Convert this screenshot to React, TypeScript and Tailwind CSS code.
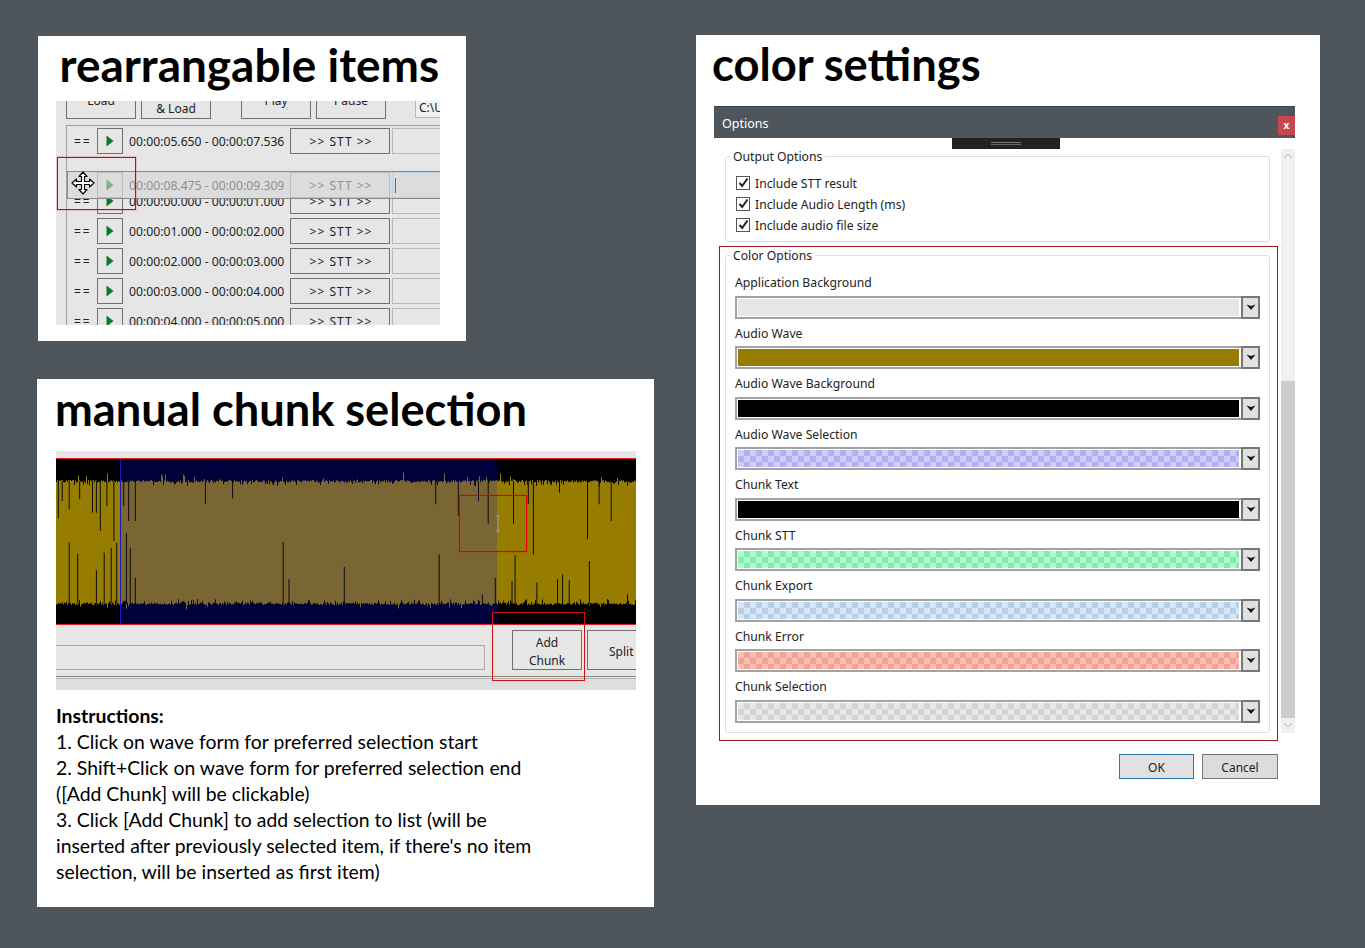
import React from "react";

const ui = "font-['Noto_Sans','Open_Sans',sans-serif]";
const title = "font-['Lato',sans-serif] font-bold text-black leading-none";

let seed = 1234567;
const rnd = () => {
  seed = (seed * 1664525 + 1013904223) % 4294967296;
  return seed / 4294967296;
};

// x and y come from a reading of the picture at its enlarged scale
const zx = (x: number) => x / 2.57 - 16;
const zy = (y: number) => y / 3 - 18;
const topSpikes: [number, number][] = [
  [47, 232], [57, 180], [75, 205], [102, 175], [135, 215], [145, 215], [155, 270], [172, 195], [190, 300], [215, 195], [228, 240], [245, 240], [425, 188], [495, 172], [1017, 190], [1075, 225], [1127, 180], [1152, 248], [1217, 248], [1255, 188], [1268, 340], [1335, 155], [1407, 295], [1437, 190], [1468, 240],
];
const bottomSpikes: [number, number][] = [
  [75, 305], [97, 338], [145, 388], [165, 335], [183, 320], [197, 305], [222, 275], [232, 320], [245, 410], [625, 303], [640, 415], [782, 378], [1026, 340], [1137, 460], [1170, 410], [1213, 420], [1221, 343], [1277, 425], [1330, 415], [1343, 400], [1360, 418], [1412, 360], [1510, 460],
];

let gold = "";
let brown = "";
let notches = "";
for (let x = 0; x < 580; x++) {
  const up = rnd() > 0.97 ? 3 + rnd() * 7 : rnd() * 2.5;
  const down = rnd() > 0.96 ? 3 + rnd() * 5 : rnd() * 2.5;
  const seg = `M${x + 0.5} ${(23.5 - up).toFixed(1)}V${(143.5 + down).toFixed(1)}`;
  if (x >= 64 && x < 441) brown += seg;
  else gold += seg;
  if (rnd() > 0.85) notches += `M${x + 0.5} ${(23 - up).toFixed(1)}v${(2 + rnd() * 2.5).toFixed(1)}`;
  if (rnd() > 0.85) notches += `M${x + 0.5} ${(144 + down).toFixed(1)}v-${(2 + rnd() * 2.5).toFixed(1)}`;
}
for (const [x, y] of topSpikes) notches += `M${zx(x).toFixed(1)} 22V${zy(y).toFixed(1)}`;
for (const [x, y] of bottomSpikes) notches += `M${zx(x).toFixed(1)} 145V${zy(y).toFixed(1)}`;

function Play({ className = "" }: { className?: string }) {
  return (
    <svg width="8" height="12" viewBox="0 0 8 12" className={className}>
      <polygon points="0.5,0.5 7.5,6 0.5,11.5" fill="#0b7a2a" />
    </svg>
  );
}

function Row({ time }: { time: string }) {
  return (
    <div className="flex items-center h-[26px] mb-[4px] shrink-0 text-[#222]">
      <span className="w-[30px] shrink-0 pl-[7px] pt-[2px] text-[12px] tracking-[2px]">==</span>
      <div className="w-[26px] h-[26px] shrink-0 border border-[#707070] flex items-center justify-center bg-[#e6e6e6]">
        <Play />
      </div>
      <span className="w-[167px] shrink-0 pl-[6px] pt-[2px] text-[12.2px] whitespace-nowrap">{time}</span>
      <div className="w-[100px] h-[26px] shrink-0 border border-[#707070] flex items-center justify-center pt-[2px] pl-[2px] text-[12px] tracking-[1px] whitespace-nowrap">
        {">> STT >>"}
      </div>
      <div className="w-[60px] h-[26px] ml-[2px] border border-[#b8b8b8] shrink-0" />
    </div>
  );
}

function TopBtn({ a, cls, spacer }: { a: string; cls: string; spacer?: boolean }) {
  return (
    <div className={`h-[40px] w-[70px] shrink-0 border border-[#707070] flex flex-col items-center justify-center pt-[4px] text-[12px] leading-[18px] text-[#222] ${cls}`}>
      {spacer && <span className="h-[18px]" />}
      <span>{a}</span>
    </div>
  );
}

function Rearrange() {
  return (
    <div className="w-[428px] h-[305px] bg-white flex flex-col">
      <h2 className={`${title} text-[45.9px] h-[65px] pl-[21.5px] pt-[6px] whitespace-nowrap`}>rearrangable items</h2>
      <div className={`${ui} relative ml-[18px] w-[384px] h-[224px] bg-[#e6e6e6] overflow-hidden`}>
        <div className="flex items-end h-[18px] pl-[10px]">
          <TopBtn a="Load" cls="" />
          <TopBtn a="& Load" cls="ml-[5px]" spacer />
          <TopBtn a="Play" cls="ml-[30px]" />
          <TopBtn a="Pause" cls="ml-[5px]" />
          <div className="ml-[29px] mb-[1px] h-[30px] w-[60px] shrink-0 border border-[#b8b8b8] bg-[#f0f0f0] text-[12px] text-[#222] pl-[3px] pt-[10px] whitespace-nowrap">C:\Users</div>
        </div>
        <div className="mt-[6px] ml-[10px] border-l border-t border-[#a0a0a0] h-[210px] pt-[2px] flex flex-col">
          <Row time="00:00:05.650 - 00:00:07.536" />
          <div className="mt-[30px]"><Row time="00:00:00.000 - 00:00:01.000" /></div>
          <Row time="00:00:01.000 - 00:00:02.000" />
          <Row time="00:00:02.000 - 00:00:03.000" />
          <Row time="00:00:03.000 - 00:00:04.000" />
          <Row time="00:00:04.000 - 00:00:05.000" />
        </div>
        {/* the row being dragged */}
        <div className="absolute left-[11px] top-[70px] w-[373px] h-[28px] bg-[#dcdcdc] border-t border-b border-l border-[#8a8a8a] flex items-center text-[#8f8f8f]">
          <span className="w-[29px] shrink-0" />
          <div className="w-[26px] h-[26px] shrink-0 border border-[#bdbdbd] flex items-center justify-center">
            <Play className="opacity-45" />
          </div>
          <span className="w-[167px] shrink-0 pl-[6px] pt-[2px] text-[12.2px] whitespace-nowrap">00:00:08.475 - 00:00:09.309</span>
          <div className="w-[100px] h-[26px] shrink-0 border border-[#bdbdbd] flex items-center justify-center pt-[2px] pl-[2px] text-[12px] tracking-[1px] whitespace-nowrap">{">> STT >>"}</div>
          <div className="w-[60px] h-[26px] ml-[2px] border border-[#b9d2e6] pl-[2px] flex items-center shrink-0">
            <span className="w-px h-[15px] bg-[#666]" />
          </div>
        </div>
        <div className="absolute left-[1px] top-[56px] w-[79px] h-[53px] border border-[#e00000] shadow-[0_0_1px_#ff0000]" />
        <svg width="24" height="24" viewBox="0 0 24 24" className="absolute left-[15px] top-[70px]">
          <path d="M12 1 16 5.500H13.500V10.500H18.500V8L23 12 18.500 16V13.500H13.500V18.500H16L12 23 8 18.500H10.500V13.500H5.500V16L1 12 5.500 8V10.500H10.500V5.500H8Z" fill="#fff" stroke="#000" strokeWidth="1.2" strokeLinejoin="round" />
        </svg>
      </div>
    </div>
  );
}

function Chunk() {
  return (
    <div className="w-[617px] h-[528px] bg-white flex flex-col">
      <h2 className={`${title} text-[45.2px] h-[72px] pl-[18px] pt-[7px] whitespace-nowrap`}>manual chunk selection</h2>
      <div className={`${ui} relative ml-[19px] w-[580px] h-[239px] bg-[#e6e6e6] overflow-hidden`}>
        <div className="mt-[7px] h-[167px] border-t border-b border-[#e01f2a] bg-black">
          <svg width="580" height="165" viewBox="0 0 580 165" className="block">
            <rect x="64" y="0" width="377" height="165" fill="#00003a" />
            <path d={gold} stroke="#967d00" strokeWidth="1" />
            <path d={brown} stroke="#7a6633" strokeWidth="1" />
            <path d={notches} stroke="#0b0b12" strokeWidth="1" />
            <rect x="64" y="0" width="1" height="165" fill="#1a1ac0" />
            <path d="M440 57h4M442 57v15M440 72h4" stroke="#9a9a9a" strokeWidth="1" fill="none" />
          </svg>
        </div>
        <div className="flex items-start h-[51px] pt-[5px]">
          <div className="mt-[15px] w-[429px] h-[25px] shrink-0 border border-l-0 border-[#a8a8a8]" />
          <div className="ml-[27px] w-[70px] h-[40px] shrink-0 border border-[#707070] flex flex-col items-center justify-center pt-[4px] text-[12px] leading-[18px] text-[#222]">
            <span>Add</span>
            <span>Chunk</span>
          </div>
          <div className="ml-[5px] w-[70px] h-[40px] shrink-0 border border-[#707070] flex items-center pl-[21px] pt-[4px] text-[12px] text-[#222]">Split</div>
        </div>
        <div className="h-[3px] border-t border-b border-t-[#8a8a8a] border-b-[#b5b5b5]" />
        <div className="h-[11px] bg-[#dedede]" />
        <div className="absolute left-[403px] top-[44px] w-[68px] h-[57px] border border-[#e00000] shadow-[0_0_1px_#ff0000]" />
        <div className="absolute left-[436px] top-[161px] w-[93px] h-[69px] border border-[#d01010]" />
      </div>
      <div className="ml-[19px] mt-[13px] w-[560px] font-['Lato',sans-serif] text-[19.4px] leading-[26px] text-black">
        <p className="font-bold">Instructions:</p>
        <p>1. Click on wave form for preferred selection start</p>
        <p>2. Shift+Click on wave form for preferred selection end</p>
        <p>([Add Chunk] will be clickable)</p>
        <p>3. Click [Add Chunk] to add selection to list (will be</p>
        <p>inserted after previously selected item, if there's no item</p>
        <p>selection, will be inserted as first item)</p>
      </div>
    </div>
  );
}

function Check({ label }: { label: string }) {
  return (
    <div className="flex items-center h-[21px]">
      <span className="w-[14px] h-[14px] -mt-[2px] border border-[#555] bg-white flex items-center justify-center">
        <svg width="11" height="11" viewBox="0 0 11 11">
          <path d="M1.500 6 4.200 9 9.500 1.500" fill="none" stroke="#222" strokeWidth="2" />
        </svg>
      </span>
      <span className="ml-[5px] pt-[2px] text-[12.2px] text-[#222] whitespace-nowrap">{label}</span>
    </div>
  );
}

const colors: { label: string; cls: string }[] = [
  { label: "Application Background", cls: "bg-[#e6e6e6]" },
  { label: "Audio Wave", cls: "bg-[#967d00]" },
  { label: "Audio Wave Background", cls: "bg-black" },
  { label: "Audio Wave Selection", cls: "bg-[conic-gradient(#b4b0ea_25%,#ccccff_0_50%,#b4b0ea_0_75%,#ccccff_0)] bg-[length:12px_12px]" },
  { label: "Chunk Text", cls: "bg-black" },
  { label: "Chunk STT", cls: "bg-[conic-gradient(#8ce8b0_25%,#a8ffcc_0_50%,#8ce8b0_0_75%,#a8ffcc_0)] bg-[length:12px_12px]" },
  { label: "Chunk Export", cls: "bg-[conic-gradient(#b8cfe6_25%,#d6e6f4_0_50%,#b8cfe6_0_75%,#d6e6f4_0)] bg-[length:12px_12px]" },
  { label: "Chunk Error", cls: "bg-[conic-gradient(#eca598_25%,#ffbcb0_0_50%,#eca598_0_75%,#ffbcb0_0)] bg-[length:12px_12px]" },
  { label: "Chunk Selection", cls: "bg-[conic-gradient(#d4d4d4_25%,#e6e6e6_0_50%,#d4d4d4_0_75%,#e6e6e6_0)] bg-[length:12px_12px]" },
];

function ColorRow({ label, cls }: { label: string; cls: string }) {
  return (
    <div className="h-[50.5px] shrink-0">
      <div className="h-[22.5px] leading-[19px] text-[12.2px] text-[#222] whitespace-nowrap">{label}</div>
      <div className="h-[23px] w-[525px] border-2 border-[#a3a3a3] flex">
        <div className="flex-1 p-[1px] pr-[2px] bg-white">
          <div className={`h-full ${cls}`} />
        </div>
        <div className="w-[19px] -my-[2px] -mr-[2px] border-2 border-[#777] bg-[#e1e1e1] flex items-center justify-center shrink-0">
          <svg width="10" height="7" viewBox="0 0 10 7">
            <path d="M0.500 0.500 5 2 9.500 0.500 5 6Z" fill="#111" />
          </svg>
        </div>
      </div>
    </div>
  );
}

function Options() {
  return (
    <div className="w-[624px] h-[770px] bg-white flex flex-col">
      <h2 className={`${title} text-[45.3px] h-[71px] pl-[16px] pt-[6px] whitespace-nowrap`}>color settings</h2>
      <div className={`${ui} ml-[18px] w-[581px] flex flex-col`}>
        <div className="h-[32px] bg-[#4e565c] border-t border-[#3e454a] flex items-center justify-between text-white">
          <span className="pl-[8px] pt-[3px] text-[12.5px]">Options</span>
          <span className="w-[17px] h-[19px] mt-[5px] bg-[#c8464f] flex items-center justify-center text-[10px] font-bold leading-none">x</span>
        </div>
        <div className="relative flex">
          <div className="absolute left-[238px] top-0 w-[108px] h-[11px] bg-[#222] flex flex-col items-center pt-[4px]">
            <div className="w-[30px] h-[3px] border-t border-b border-t-[#777] border-b-[#666]" />
          </div>
          <div className="w-[567px] shrink-0 flex flex-col">
            <fieldset className="ml-[11px] mt-[10px] w-[545px] h-[94px] border border-[#d8dfe3] rounded-[3px] pl-[10px]">
              <legend className="ml-[-6px] px-[3px] h-[16px] text-[12.2px] leading-[18px] text-[#222]">Output Options</legend>
              <div className="pt-[9px]">
                <Check label="Include STT result" />
                <Check label="Include Audio Length (ms)" />
                <Check label="Include audio file size" />
              </div>
            </fieldset>
            <div className="ml-[5px] mt-[4px] w-[559px] h-[495px] border border-[#9b1c24] pl-[5px]">
              <fieldset className="w-[545px] h-[486px] border border-[#d8dfe3] rounded-[3px] pl-[9px]">
                <legend className="ml-[-5px] px-[3px] h-[16px] text-[12.2px] leading-[18px] text-[#222]">Color Options</legend>
                <div className="pt-[10px]">
                  {colors.map((c) => (
                    <ColorRow key={c.label} label={c.label} cls={c.cls} />
                  ))}
                </div>
              </fieldset>
            </div>
            <div className="flex justify-end gap-[8px] pr-[3px] mt-[13px]">
              <div className="w-[75px] h-[25px] border border-[#2a7ab5] bg-[#e1e1e1] flex items-center justify-center pt-[2px] text-[12px] text-[#222]">OK</div>
              <div className="w-[76px] h-[25px] border border-[#777] bg-[#dcdcdc] flex items-center justify-center pt-[2px] text-[12px] text-[#222]">Cancel</div>
            </div>
          </div>
          <div className="w-[14px] h-[584px] mt-[11px] bg-[#f0f0f0] flex flex-col justify-between items-center">
            <div className="flex-1 flex flex-col">
              <svg width="14" height="14" viewBox="0 0 14 14" className="shrink-0">
                <path d="M3 9 7 5 11 9" fill="none" stroke="#b5b5b5" strokeWidth="1" />
              </svg>
              <div className="mt-[218px] h-[337px] w-[14px] bg-[#cdcdcd]" />
              <svg width="14" height="15" viewBox="0 0 14 15" className="shrink-0">
                <path d="M3 5 7 9 11 5" fill="none" stroke="#b5b5b5" strokeWidth="1" />
              </svg>
            </div>
          </div>
        </div>
      </div>
    </div>
  );
}

export default function App() {
  return (
    <div className="min-h-screen bg-[#4e565c] flex items-start overflow-hidden">
      <div className="flex flex-col shrink-0">
        <div className="ml-[38px] mt-[36px]"><Rearrange /></div>
        <div className="ml-[37px] mt-[38px]"><Chunk /></div>
      </div>
      <div className="ml-[42px] mt-[35px] shrink-0"><Options /></div>
    </div>
  );
}
